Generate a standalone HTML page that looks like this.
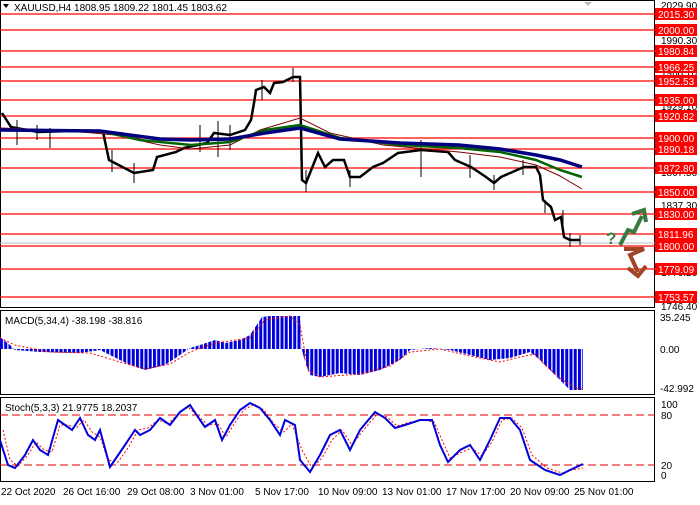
<!DOCTYPE html>
<html><head><style>
body{margin:0;background:#fff;width:700px;height:500px;overflow:hidden;font-family:"Liberation Sans",sans-serif}
svg text{font-family:"Liberation Sans",sans-serif;font-size:10px}
</style></head><body>
<svg width="700" height="500" viewBox="0 0 700 500">
<defs>
<pattern id="bars" x="0" y="0" width="4.25" height="10" patternUnits="userSpaceOnUse"><rect x="0" y="0" width="3" height="10" fill="#0000dd"/></pattern>
</defs>
<rect x="0" y="0" width="700" height="500" fill="#fff"/>
<rect x="0.5" y="0.5" width="654" height="307" fill="none" stroke="#000"/>
<g stroke="#f00" stroke-width="1.3">
<line x1="0" x2="655" y1="14" y2="14"/><line x1="0" x2="655" y1="30" y2="30"/>
<line x1="0" x2="655" y1="51" y2="51"/><line x1="0" x2="655" y1="67" y2="67"/>
<line x1="0" x2="655" y1="81" y2="81"/><line x1="0" x2="655" y1="100" y2="100"/>
<line x1="0" x2="655" y1="116" y2="116"/><line x1="0" x2="655" y1="138" y2="138"/>
<line x1="0" x2="655" y1="149" y2="149"/><line x1="0" x2="655" y1="168" y2="168"/>
<line x1="0" x2="655" y1="192" y2="192"/><line x1="0" x2="655" y1="214" y2="214"/>
<line x1="0" x2="655" y1="234" y2="234"/><line x1="0" x2="655" y1="246" y2="246"/>
<line x1="0" x2="655" y1="269" y2="269"/><line x1="0" x2="655" y1="297" y2="297"/>
</g>
<line x1="0" x2="655" y1="243" y2="243" stroke="#bbb"/>
<text x="14" y="11" fill="#000">XAUUSD,H4  1808.95 1809.22 1801.45 1803.62</text>
<path d="M3 4 L9 4 L6 8Z" fill="#000"/>
<path d="M584 2 L592 2 L588 6Z" fill="#bbb"/>
<!-- price -->
<polyline fill="none" stroke="#000" stroke-width="2.5" points="2,113 11,127 38,132 70,131 103,132 109,160 134,173 153,170 157,157 176,152 184,148 207,143 214,133 230,135 245,130 251,120 254,103 256,90 264,87 270,93 274,83 283,82 293,77 300,77 302,180 306,183 314,163 318,153 325,167 333,160 344,160 350,177 360,177 373,167 383,163 398,153 421,150 448,152 455,160 471,167 486,177 494,183 501,177 517,170 524,167 536,167 540,175 543,200 551,207 555,220 561,217 564,237 570,240 580,240"/>
<g stroke="#000" stroke-width="1">
<line x1="17" y1="120" x2="17" y2="145"/><line x1="37" y1="125" x2="37" y2="140"/><line x1="50" y1="128" x2="50" y2="148"/><line x1="112" y1="150" x2="112" y2="172"/><line x1="134" y1="163" x2="134" y2="183"/><line x1="200" y1="125" x2="200" y2="152"/><line x1="218" y1="121" x2="218" y2="157"/><line x1="230" y1="125" x2="230" y2="150"/><line x1="262" y1="80" x2="262" y2="100"/><line x1="293" y1="68" x2="293" y2="82"/><line x1="306" y1="170" x2="306" y2="192"/><line x1="350" y1="170" x2="350" y2="187"/><line x1="421" y1="140" x2="421" y2="177"/><line x1="470" y1="155" x2="470" y2="178"/><line x1="494" y1="175" x2="494" y2="190"/><line x1="523" y1="160" x2="523" y2="175"/><line x1="545" y1="200" x2="545" y2="213"/><line x1="563" y1="210" x2="563" y2="230"/><line x1="570" y1="233" x2="570" y2="247"/><line x1="580" y1="235" x2="580" y2="245"/>
</g>
<polyline fill="none" stroke="#800000" stroke-width="1" points="0,128 60,130 115,135 160,145 191,149 230,145 260,130 300,118 330,133 383,145 459,152 500,157 536,165 560,176 582,189"/>
<polyline fill="none" stroke="#006400" stroke-width="2.5" points="0,130 100,131 140,140 191,145 230,142 265,130 300,125 340,138 400,145 459,148 500,152 536,160 560,170 582,177"/>
<polyline fill="none" stroke="#000080" stroke-width="3.5" points="0,130 100,131 160,139 191,140 230,139 265,133 300,128 340,139 400,143 459,145 500,149 536,155 560,160 582,167"/>
<!-- arrows -->
<text x="606" y="244" fill="#3a8040" style="font-size:17px;font-weight:bold">?</text>
<polyline points="620,245 628,230 634,232 642,216" fill="none" stroke="#3a7a40" stroke-width="4"/>
<path d="M632,214 L644,210 L646,222" fill="none" stroke="#3a7a40" stroke-width="4"/>
<polyline points="624,249 644,249 630,255 638,272" fill="none" stroke="#a04428" stroke-width="4"/>
<path d="M628,268 L638,276 L646,266" fill="none" stroke="#a04428" stroke-width="4"/>
<!-- price labels -->
<g fill="#000">
<text x="661" y="9">2029.90</text><text x="661" y="44">1990.30</text><text x="661" y="76">1968.70</text><text x="661" y="110">1929.10</text><text x="661" y="176">1867.50</text><text x="661" y="209">1837.30</text><text x="661" y="252">1807.70</text><text x="661" y="276">1776.20</text><text x="661" y="310">1746.40</text>
</g>
<g fill="#f00">
<rect x="655" y="8" width="42" height="12"/><rect x="655" y="24" width="42" height="12"/><rect x="655" y="45" width="42" height="12"/><rect x="655" y="61" width="42" height="12"/><rect x="655" y="75" width="42" height="12"/><rect x="655" y="94" width="42" height="12"/><rect x="655" y="110" width="42" height="12"/><rect x="655" y="132" width="42" height="12"/><rect x="655" y="143" width="42" height="12"/><rect x="655" y="162" width="42" height="12"/><rect x="655" y="186" width="42" height="12"/><rect x="655" y="208" width="42" height="12"/><rect x="655" y="228" width="42" height="12"/><rect x="655" y="240" width="42" height="12"/><rect x="655" y="263" width="42" height="12"/><rect x="655" y="291" width="42" height="12"/>
</g>
<g fill="#fff">
<text x="658" y="18">2015.30</text><text x="658" y="34">2000.00</text><text x="658" y="55">1980.84</text><text x="658" y="71">1966.25</text><text x="658" y="85">1952.53</text><text x="658" y="104">1935.00</text><text x="658" y="120">1920.82</text><text x="658" y="142">1900.00</text><text x="658" y="153">1890.18</text><text x="658" y="172">1872.80</text><text x="658" y="196">1850.00</text><text x="658" y="218">1830.00</text><text x="658" y="238">1811.96</text><text x="658" y="250">1800.00</text><text x="658" y="273">1779.09</text><text x="658" y="301">1753.57</text>
</g>
<!-- MACD -->
<rect x="0.5" y="310.5" width="654" height="84" fill="none" stroke="#000"/>
<polygon fill="url(#bars)" points="0,337 10,345 15,350 40,352 80,353 100,350 110,355 130,365 145,370 165,365 180,355 190,348 200,345 215,340 225,343 240,340 250,335 258,323 262,317 270,316 300,316 302,350 305,362 310,375 320,377 340,373 360,375 380,370 400,360 410,350 430,348 450,350 470,355 490,360 510,358 520,355 530,352 540,360 550,370 560,380 570,390 583,390 583,349 0,349"/>
<polyline fill="none" stroke="#f00" stroke-dasharray="2,2" points="0,338 15,345 50,352 90,353 120,362 145,369 170,364 190,352 215,343 250,338 265,320 290,316 300,325 308,370 320,377 360,374 390,366 410,352 440,349 470,356 500,362 520,357 535,354 545,365 560,378 575,388 583,389"/>
<text x="5" y="324" fill="#000">MACD(5,34,4) -38.198 -38.816</text>
<text x="660" y="321" fill="#000">35.245</text><text x="660" y="353" fill="#000">0.00</text><text x="660" y="392" fill="#000">-42.992</text>
<!-- Stoch -->
<rect x="0.5" y="397.5" width="654" height="84" fill="none" stroke="#000"/>
<line x1="0" x2="655" y1="415" y2="415" stroke="#d00" stroke-dasharray="8,4"/>
<line x1="0" x2="655" y1="465" y2="465" stroke="#d00" stroke-dasharray="8,4"/>
<polyline fill="none" stroke="#f00" stroke-dasharray="2,2" points="3,430 10,460 18,466 28,455 36,442 44,450 52,452 60,425 68,425 76,428 84,420 92,432 100,437 108,460 118,462 128,448 138,430 148,428 158,420 168,424 178,414 188,407 198,416 208,425 218,424 226,437 234,424 244,410 254,404 264,410 274,424 284,432 292,424 302,450 312,468 322,458 332,440 342,430 352,445 362,432 377,414 387,417 397,426 407,423 422,420 434,422 442,440 450,458 462,452 472,448 482,456 492,442 502,420 512,418 522,428 532,455 547,468 562,473 572,470 583,468"/>
<polyline fill="none" stroke="#0000dd" stroke-width="2" points="0,440 8,465 15,468 25,455 33,440 40,450 48,455 58,420 65,425 72,430 80,418 88,435 95,440 100,430 110,467 125,445 135,430 140,435 150,430 160,418 170,425 180,412 190,405 200,420 205,427 215,420 222,440 230,425 240,410 250,403 260,408 270,420 280,435 285,420 295,425 300,460 310,472 320,455 330,435 340,430 350,450 360,430 375,412 385,418 395,428 405,425 420,420 432,420 440,445 448,462 460,450 470,445 480,460 490,440 500,418 510,418 520,430 530,460 545,470 560,475 570,470 583,464"/>
<text x="5" y="411" fill="#000">Stoch(5,3,3) 21.9775 18.2037</text>
<text x="661" y="408" fill="#000">100</text><text x="661" y="419" fill="#000">80</text><text x="661" y="469" fill="#000">20</text><text x="661" y="479" fill="#000">0</text>
<g fill="#000">
<text x="1" y="495">22 Oct 2020</text><text x="63" y="495">26 Oct 16:00</text><text x="127" y="495">29 Oct 08:00</text><text x="190" y="495">3 Nov 01:00</text><text x="255" y="495">5 Nov 17:00</text><text x="318" y="495">10 Nov 09:00</text><text x="382" y="495">13 Nov 01:00</text><text x="446" y="495">17 Nov 17:00</text><text x="510" y="495">20 Nov 09:00</text><text x="574" y="495">25 Nov 01:00</text>
</g>
</svg>
</body></html>
